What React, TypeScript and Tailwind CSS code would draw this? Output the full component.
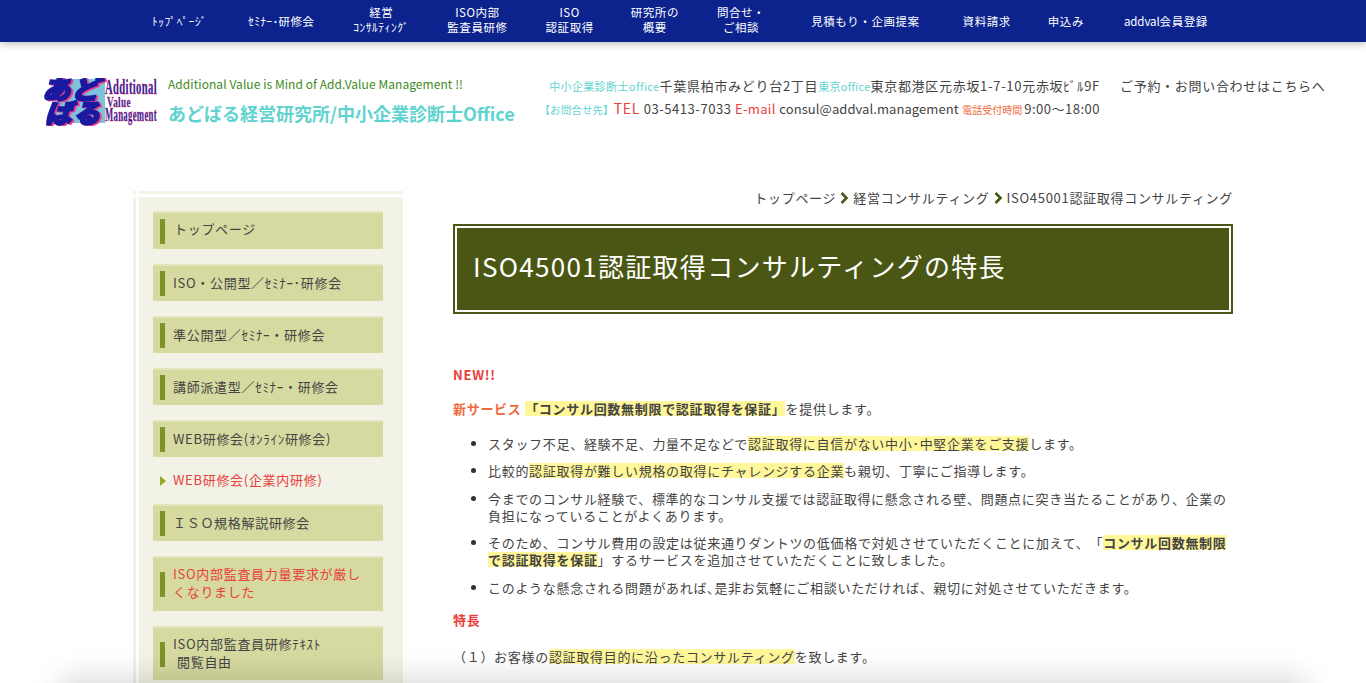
import React from "react";

const FONT = '"Noto Sans CJK JP","Noto Sans",sans-serif';

const navItems: { lines: React.ReactNode[]; cls: string }[] = [
  { lines: ["ﾄｯﾌﾟﾍﾟｰｼﾞ"], cls: "ml-0" },
  { lines: ["ｾﾐﾅｰ･研修会"], cls: "ml-[41px] tracking-[0.35px]" },
  { lines: ["経営", "ｺﾝｻﾙﾃｨﾝｸﾞ"], cls: "ml-[39px] pb-[2px]" },
  { lines: ["ISO内部", "監査員研修"], cls: "ml-[38px] pb-[2px]" },
  { lines: ["ISO", "認証取得"], cls: "ml-[38px] pb-[2px]" },
  { lines: ["研究所の", "概要"], cls: "ml-[37px] pb-[2px]" },
  { lines: ["問合せ・", "ご相談"], cls: "ml-[38px] pb-[2px]" },
  { lines: ["見積もり・企画提案"], cls: "ml-[46px]" },
  { lines: ["資料請求"], cls: "ml-[43px]" },
  { lines: ["申込み"], cls: "ml-[37px]" },
  { lines: [<><span className="tracking-[-0.1px]">addval</span>会員登録</>], cls: "ml-[40px]" },
];

function Logo() {
  return (
    <svg width="118" height="48" viewBox="0 0 118 48" className="shrink-0" aria-label="あどばる Additional Value Management">
      <rect x="15" y="1" width="50" height="44" fill="#7dc3dd" />
      <g fontFamily={FONT} fontWeight="900" fontStyle="italic" fill="#1a1aa0" stroke="#1a1aa0" strokeWidth="1.8" className="drop-shadow-[2px_1px_0_#ef3f8c]">
        <text x="2" y="21" fontSize="26" textLength="58" lengthAdjust="spacingAndGlyphs">あど</text>
        <text x="5" y="45" fontSize="26" textLength="56" lengthAdjust="spacingAndGlyphs">ばる</text>
      </g>
      <g fontFamily='"Liberation Serif",serif' fontWeight="700" fill="#23209a" stroke="#d9306e" strokeWidth="0.35">
        <text x="65" y="16" fontSize="21" textLength="52" lengthAdjust="spacingAndGlyphs">Additional</text>
        <text x="67" y="29" fontSize="15" textLength="24" lengthAdjust="spacingAndGlyphs">Value</text>
        <text x="65" y="43" fontSize="18" textLength="52" lengthAdjust="spacingAndGlyphs">Management</text>
      </g>
    </svg>
  );
}

function Chevron() {
  return (
    <svg width="9" height="12" viewBox="0 0 9 12" className="mx-[4px] inline-block align-[-1px]">
      <path d="M1.5 1 L6.5 6 L1.5 11" fill="none" stroke="#4a5714" strokeWidth="2.6" />
    </svg>
  );
}

function SideItem({ children, red, cls, tp }: { children: React.ReactNode; red?: boolean; cls: string; tp: string }) {
  return (
    <div className={`flex items-center bg-[#d6d9a0] border-t-2 border-[#e3e5bd] pl-[7px] pr-[20px] ${cls}`}>
      <div className="w-[5px] h-[25px] bg-[#7d9227] shrink-0" />
      <div className={`ml-[8px] leading-[18px] ${tp} ${red ? "text-[#e8403c]" : "text-[#444]"}`}>{children}</div>
    </div>
  );
}

function Hl({ children, bold }: { children: React.ReactNode; bold?: boolean }) {
  return (
    <span
      className={`bg-[linear-gradient(#fff799,#fff799)] bg-no-repeat bg-[length:100%_15px] bg-center box-decoration-clone ${bold ? "font-bold" : ""}`}
    >
      {children}
    </span>
  );
}

export default function App() {
  return (
    <div
      className="relative h-[683px] overflow-hidden bg-white text-[13px] tracking-[0.7px] text-[#444] leading-[1.3] [text-spacing-trim:space-all]"
      style={{ fontFamily: FONT }}
    >
      <nav className="h-[42px] bg-[#0c238e] shadow-[0_2px_8px_rgba(0,0,0,0.25)] flex items-center pl-[152px] text-white text-[11.5px] tracking-[0.55px] leading-[15px]">
        {navItems.map((n, i) => (
          <div key={i} className={`text-center whitespace-nowrap ${n.cls}`}>
            {n.lines.map((l, j) => (
              <div key={j}>{l}</div>
            ))}
          </div>
        ))}
      </nav>

      <header className="flex items-start pl-[40px] pt-[36px] h-[149px]">
        <Logo />
        <div className="ml-[10px] mt-[-3px] w-[349px] shrink-0">
          <div className="text-[12px] tracking-[0.06px] text-[#3f8a1c] leading-[18px]">Additional Value is Mind of Add.Value Management !!</div>
          <div className="text-[18px] tracking-normal font-bold text-[#5fd3d0] leading-[26px] mt-[7px] whitespace-nowrap">あどばる経営研究所/中小企業診断士Office</div>
        </div>
        <div className="ml-[20px] w-[563px] text-right whitespace-nowrap mt-[-2px] shrink-0">
          <div className="leading-[20px]">
            <span className="text-[11px] tracking-[0.4px] text-[#5fd3d0]">中小企業診断士office</span>
            <span>千葉県柏市みどり台2丁目</span>
            <span className="text-[11px] tracking-[0.25px] text-[#5fd3d0]">東京office</span>
            <span>東京都港区元赤坂1-7-10元赤坂ﾋﾞﾙ9F</span>
          </div>
          <div className="leading-[20px] mt-[2px]">
            <span className="text-[10.5px] tracking-[0.1px] text-[#5fd3d0]">【お問合せ先】</span>
            <span className="text-[14px] text-[#e8403c]">TEL</span> <span className="tracking-[0.55px]">03-5413-7033</span>{" "}
            <span className="text-[#e8403c] tracking-[0.3px]">E-mail</span> <span className="tracking-[0.07px]">consul@addval.management</span>{" "}
            <span className="text-[10px] tracking-normal text-[#f0693a]">電話受付時間</span>
            <span className="ml-[2px] tracking-[0.5px]">9:00〜18:00</span>
          </div>
        </div>
        <div className="ml-[20px] mt-[-2px] leading-[20px] whitespace-nowrap">ご予約・お問い合わせはこちらへ</div>
      </header>

      <main className="flex pl-[133px]">
        <aside className="w-[270px] h-[492px] grid grid-cols-[3px_3px_264px] grid-rows-[3px_3px_486px] shrink-0">
          <div className="bg-[#f2f2e6]" />
          <div />
          <div className="bg-[#f2f2e6]" />
          <div />
          <div />
          <div />
          <div className="bg-[#f2f2e6]" />
          <div />
          <div className="bg-[#f2f2e6] pl-[14px] pt-[14px] pr-[20px] flex flex-col">
            <SideItem cls="h-[38px]" tp="pb-[5px]"><span className="ml-px">トップページ</span></SideItem>
            <SideItem cls="h-[37px] mt-[15px]" tp="pb-[1px]">ISO・公開型／ｾﾐﾅｰ･研修会</SideItem>
            <SideItem cls="h-[37px] mt-[15px]" tp="pb-[1px]">準公開型／ｾﾐﾅｰ・研修会</SideItem>
            <SideItem cls="h-[37px] mt-[15px]" tp="pb-[1px]">講師派遣型／ｾﾐﾅｰ・研修会</SideItem>
            <SideItem cls="h-[37px] mt-[15px]" tp="pb-[1px]">WEB研修会(ｵﾝﾗｲﾝ研修会)</SideItem>
            <div className="h-[47px] flex items-center pl-[7px] text-[#e8403c]">
              <svg width="6" height="10" viewBox="0 0 6 10" className="shrink-0"><path d="M0 0 L6 5 L0 10 Z" fill="#95a82a" /></svg>
              <span className="ml-[7px] pb-[1px]">WEB研修会(企業内研修)</span>
            </div>
            <SideItem cls="h-[37px]" tp="pb-[1px]">ＩＳＯ規格解説研修会</SideItem>
            <SideItem cls="h-[55px] mt-[15px]" tp="pb-[3px]" red>ISO内部監査員力量要求が厳しくなりました</SideItem>
            <SideItem cls="h-[54px] mt-[15px]" tp="pb-[2px]">ISO内部監査員研修ﾃｷｽﾄ<br /><span className="ml-[4px]">閲覧自由</span></SideItem>
          </div>
        </aside>

        <article className="ml-[50px] w-[780px]">
          <div className="text-right leading-[17px] mt-[-2px] whitespace-nowrap">
            トップページ<Chevron />経営コンサルティング<Chevron />ISO45001認証取得コンサルティング
          </div>
          <div className="mt-[18px] h-[90px] border-2 border-[#4a5714] bg-[#4a5714]">
            <h1 className="h-full border-2 border-white flex items-center pl-[16px] pb-[6px] text-[26px] tracking-[1.3px] text-white font-normal leading-none">
              ISO45001認証取得コンサルティングの特長
            </h1>
          </div>
          <p className="mt-[53px] font-bold text-[#e8403c]">NEW!!</p>
          <p className="mt-[17px]">
            <span className="font-bold text-[#f0693a]">新サービス</span>
            <span className="font-bold"> <Hl>「コンサル回数無制限で認証取得を保証」</Hl></span>を提供します。
          </p>
          <ul className="mt-[18px] pl-[35px] list-disc marker:text-[#333] flex flex-col gap-[10.7px]">
            <li>スタッフ不足、経験不足、力量不足などで<Hl>認証取得に自信がない中小･中堅企業をご支援</Hl>します。</li>
            <li>比較的<Hl>認証取得が難しい規格の取得にチャレンジする企業</Hl>も親切、丁寧にご指導します。</li>
            <li>今までのコンサル経験で、標準的なコンサル支援では認証取得に懸念される壁、問題点に突き当たることがあり、企業の負担になっていることがよくあります。</li>
            <li>そのため、コンサル費用の設定は従来通りダントツの低価格で対処させていただくことに加えて、「<Hl bold>コンサル回数無制限で認証取得を保証</Hl>」するサービスを追加させていただくことに致しました。</li>
            <li>このような懸念される問題があれば､是非お気軽にご相談いただければ、親切に対処させていただきます。</li>
          </ul>
          <p className="mt-[15px] font-bold text-[#e8403c]">特長</p>
          <p className="mt-[20px]">（１）お客様の<Hl>認証取得目的に沿ったコンサルティング</Hl>を致します。</p>
        </article>
      </main>

      <div className="absolute left-[70px] right-[70px] top-[690px] h-[10px] rounded-full shadow-[0_0_30px_12px_rgba(0,0,0,0.16)]" />
    </div>
  );
}
